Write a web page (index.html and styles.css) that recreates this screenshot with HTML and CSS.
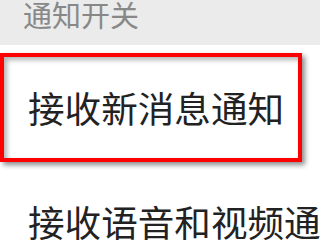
FILE: index.html
```html
<!DOCTYPE html>
<html lang="zh-CN">
<head>
<meta charset="utf-8">
<title>通知开关</title>
<link rel="stylesheet" href="styles.css">
</head>
<body>
<div class="page">
  <div class="section-header">通知开关</div>
  <div class="item item-highlight">接收新消息通知</div>
  <div class="item item-next">接收语音和视频通知</div>
</div>
</body>
</html>
```
FILE: styles.css
```css
html, body {
  margin: 0;
  padding: 0;
  background: #ffffff;
  overflow: hidden;
}
.page {
  width: 320px;
  height: 240px;
  overflow: hidden;
  font-family: "Noto Sans CJK SC", "Noto Sans", sans-serif;
}
.section-header {
  height: 45px;
  background: #ebebeb;
  color: #888888;
  font-size: 29px;
  line-height: 29px;
  padding-left: 23px;
  box-sizing: border-box;
  white-space: nowrap;
}
.item {
  font-size: 36.6px;
  line-height: 36px;
  color: #222222;
  white-space: nowrap;
}
.item-highlight {
  margin-top: 8px;
  width: 302px;
  height: 109px;
  box-sizing: border-box;
  border: 4px solid #ff0000;
  display: flex;
  align-items: center;
  padding-left: 24px;
  box-shadow: 3px 3px 5px rgba(0, 0, 0, 0.45), inset 3px 3px 5px rgba(0, 0, 0, 0.3);
}
.item-next {
  margin-top: 42px;
  padding-left: 28px;
}
```
